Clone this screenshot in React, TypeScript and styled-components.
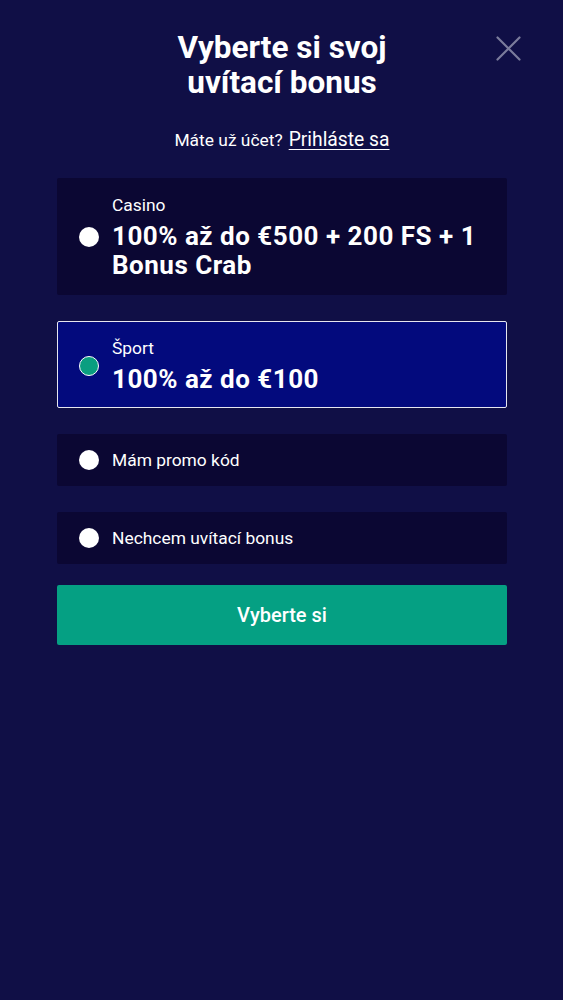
import { useState } from "react";
import styled, { createGlobalStyle } from "styled-components";

const GlobalStyle = createGlobalStyle`
  html, body {
    margin: 0;
    padding: 0;
    background: #100f46;
  }
  body {
    font-family: Roboto, "Noto Sans", sans-serif;
    color: #ffffff;
  }
`;

const Page = styled.div`
  min-height: 1000px;
  background: #100f46;
  padding: 30px 56px 0 57px;
  box-sizing: border-box;
  position: relative;
`;

const Header = styled.div`
  display: flex;
  flex-direction: column;
  align-items: center;
`;

const Titulo = styled.h1`
  margin: 0;
  font-size: 31.5px;
  line-height: 35px;
  font-weight: 700;
  text-align: center;
  width: 280px;
`;

const BotaoFechar = styled.button`
  position: absolute;
  top: 36px;
  left: 496px;
  width: 25px;
  height: 25px;
  padding: 0;
  border: none;
  background: none;
  cursor: pointer;
`;

const LinhaConta = styled.p`
  margin: 29px 0 0;
  font-size: 17.4px;
  line-height: 22px;
  text-align: center;
`;

const LinkLogin = styled.a`
  color: #ffffff;
  font-size: 19.3px;
  text-decoration: underline;
  text-decoration-thickness: 1px;
  text-underline-offset: 3px;
  margin-left: 6px;
`;

const Lista = styled.div`
  display: flex;
  flex-direction: column;
  gap: 26px;
  margin-top: 27px;
`;

const Cartao = styled.label<{ $ativo: boolean }>`
  display: flex;
  align-items: center;
  gap: 13px;
  padding: ${({ $ativo }) => ($ativo ? "15.5px 21px 13.5px" : "16.5px 22px 15.5px")};
  background: ${({ $ativo }) => ($ativo ? "#030a7d" : "#0b0733")};
  border: ${({ $ativo }) => ($ativo ? "1px solid #e6e6ef" : "none")};
  border-radius: 2px;
  cursor: pointer;
`;

const CartaoSimples = styled(Cartao)`
  padding-top: 15.5px;
  padding-bottom: 15.5px;
`;

const Radio = styled.span<{ $ativo: boolean }>`
  flex: 0 0 auto;
  width: 20px;
  height: 20px;
  border-radius: 50%;
  box-sizing: border-box;
  background: ${({ $ativo }) => ($ativo ? "#0a9e80" : "#ffffff")};
  border: ${({ $ativo }) => ($ativo ? "1px solid #ffffff" : "none")};
`;

const Textos = styled.div`
  display: flex;
  flex-direction: column;
`;

const Categoria = styled.span`
  font-size: 17.4px;
  line-height: 21px;
`;

const Oferta = styled.span`
  font-size: 26px;
  line-height: 29px;
  font-weight: 700;
  letter-spacing: 0.5px;
  margin-top: 6px;
`;

const Opcao = styled.span`
  font-size: 17.4px;
  line-height: 21px;
`;

const BotaoEscolher = styled.button`
  margin-top: 21px;
  width: 100%;
  height: 60px;
  border: none;
  border-radius: 2px;
  background: #05a083;
  color: #ffffff;
  font-family: Roboto, "Noto Sans", sans-serif;
  font-size: 20px;
  font-weight: 500;
  cursor: pointer;
`;

type Bonus = {
  id: string;
  categoria?: string;
  texto: string;
};

const bonusy: Bonus[] = [
  { id: "casino", categoria: "Casino", texto: "100% až do €500 + 200 FS + 1 Bonus Crab" },
  { id: "sport", categoria: "Šport", texto: "100% až do €100" },
  { id: "promo", texto: "Mám promo kód" },
  { id: "none", texto: "Nechcem uvítací bonus" },
];

export default function App() {
  const [vybrany, setVybrany] = useState("sport");

  return (
    <>
      <GlobalStyle />
      <Page>
        <BotaoFechar aria-label="Zavrieť">
          <svg width="25" height="25" viewBox="0 0 25 25">
            <path d="M1.5 1.5L23.5 23.5M23.5 1.5L1.5 23.5" stroke="#7b7c9c" strokeWidth="2.2" strokeLinecap="round" />
          </svg>
        </BotaoFechar>
        <Header>
          <Titulo>Vyberte si svoj uvítací bonus</Titulo>
          <LinhaConta>
            Máte už účet?
            <LinkLogin href="#">Prihláste sa</LinkLogin>
          </LinhaConta>
        </Header>
        <Lista>
          {bonusy.map((b) => {
            const ativo = vybrany === b.id;
            if (!b.categoria) {
              return (
                <CartaoSimples key={b.id} $ativo={ativo} onClick={() => setVybrany(b.id)}>
                  <Radio $ativo={ativo} />
                  <Opcao>{b.texto}</Opcao>
                </CartaoSimples>
              );
            }
            return (
              <Cartao key={b.id} $ativo={ativo} onClick={() => setVybrany(b.id)}>
                <Radio $ativo={ativo} />
                <Textos>
                  <Categoria>{b.categoria}</Categoria>
                  <Oferta>{b.texto}</Oferta>
                </Textos>
              </Cartao>
            );
          })}
        </Lista>
        <BotaoEscolher>Vyberte si</BotaoEscolher>
      </Page>
    </>
  );
}
